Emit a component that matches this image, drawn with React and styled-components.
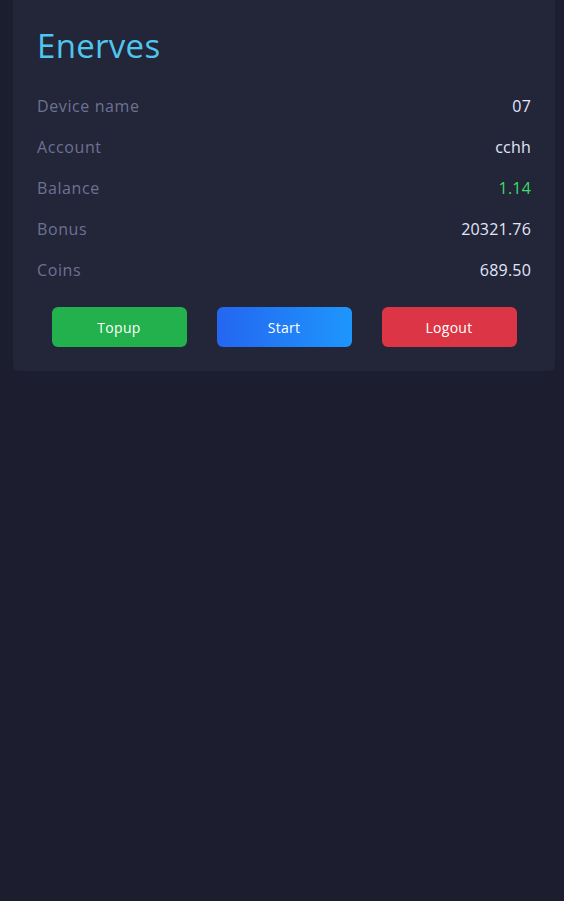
import React from 'react'
import styled, { createGlobalStyle } from 'styled-components'

const GlobalStyle = createGlobalStyle`
  html, body {
    margin: 0;
    padding: 0;
    background: #1c1d2e;
    font-family: "Open Sans", "Liberation Sans", sans-serif;
  }
  #root {
    min-height: 100vh;
  }
`

const Page = styled.div`
  padding: 0 9px 0 13px;
`

const Card = styled.div`
  background: #232538;
  border-radius: 0 0 5px 5px;
  padding: 24px 24px 24px;
`

const Title = styled.h1`
  margin: 0 0 17px;
  font-size: 33px;
  font-weight: 400;
  line-height: 44px;
  letter-spacing: 0.3px;
  color: #4fc6ee;
`

const Row = styled.div`
  display: flex;
  justify-content: space-between;
  align-items: center;
  height: 41px;
  font-size: 16px;
  letter-spacing: 0.6px;
`

const Label = styled.span`
  color: #6c7293;
`

const Value = styled.span`
  color: ${(p) => (p.$green ? '#3ddc68' : '#e1e6fb')};
  font-weight: 500;
  letter-spacing: 0.2px;
`

const Actions = styled.div`
  display: flex;
  justify-content: center;
  gap: 30px;
  margin-top: 17px;
`

const Button = styled.button`
  width: 135px;
  height: 40px;
  border: none;
  border-radius: 6px;
  font-family: inherit;
  font-size: 14px;
  font-weight: 500;
  letter-spacing: 0.3px;
  color: #fff;
  background: ${(p) => p.$bg};
  cursor: pointer;
`

const rows = [
  { label: 'Device name', value: '07' },
  { label: 'Account', value: 'cchh' },
  { label: 'Balance', value: '1.14', green: true },
  { label: 'Bonus', value: '20321.76' },
  { label: 'Coins', value: '689.50' },
]

const App = () => {
  return (
    <Page>
      <GlobalStyle />
      <Card>
        <Title>Enerves</Title>
        {rows.map((r) => (
          <Row key={r.label}>
            <Label>{r.label}</Label>
            <Value $green={r.green}>{r.value}</Value>
          </Row>
        ))}
        <Actions>
          <Button $bg="#22b14c">Topup</Button>
          <Button $bg="linear-gradient(90deg, #2466f0, #1e96fc)">Start</Button>
          <Button $bg="#dc3545">Logout</Button>
        </Actions>
      </Card>
    </Page>
  )
}

export default App
